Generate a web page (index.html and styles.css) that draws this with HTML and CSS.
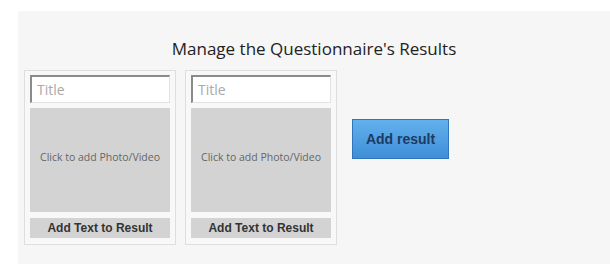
FILE: index.html
```html
<!DOCTYPE html>
<html lang="en">
<head>
    <meta charset="UTF-8">
    <meta name="viewport" content="width=device-width, initial-scale=1.0">
    <title>Questionnaire - Results</title>
    <link rel="stylesheet" href="styles.css">
</head>
<body>
    <div class="panel">
        <h2>Manage the Questionnaire's Results</h2>
        <div class="results">
            <div class="result-card">
                <input type="text" class="result-title" placeholder="Title">
                <div class="result-media">Click to add Photo/Video</div>
                <button type="button" class="result-text-btn">Add Text to Result</button>
            </div>
            <div class="result-card">
                <input type="text" class="result-title" placeholder="Title">
                <div class="result-media">Click to add Photo/Video</div>
                <button type="button" class="result-text-btn">Add Text to Result</button>
            </div>
            <button type="button" class="add-result-btn">Add result</button>
        </div>
    </div>
</body>
</html>
```

FILE: styles.css
```css
body {
    margin: 0;
    background-color: #fff;
    font-family: "Open Sans", Arial, sans-serif;
    color: #333;
}

.panel {
    margin: 11px 0 0 18px;
    height: 253px;
    padding: 0 6px;
    background-color: #f6f6f6;
    box-sizing: border-box;
}

h2 {
    margin: 0;
    padding-top: 26px;
    height: 59px;
    box-sizing: border-box;
    text-align: center;
    font-size: 17px;
    font-weight: normal;
    color: #222;
}

.results {
    display: flex;
    align-items: flex-start;
    gap: 9px;
}

.result-card {
    width: 152px;
    padding: 4px 5px 6px;
    border: 1px solid #dedede;
    background-color: #f8f8f8;
    box-sizing: border-box;
    display: flex;
    flex-direction: column;
}

.result-title {
    height: 28px;
    padding: 0 5px;
    border-top: 2px solid #8a8a8a;
    border-left: 2px solid #8a8a8a;
    border-right: 1px solid #e2e2e2;
    border-bottom: 1px solid #e2e2e2;
    background-color: #fff;
    font-family: "Open Sans", Arial, sans-serif;
    font-size: 14px;
    box-sizing: border-box;
    outline: none;
}

.result-title::placeholder {
    color: #aaa;
}

.result-media {
    height: 104px;
    padding-bottom: 6px;
    margin-top: 5px;
    background-color: #d3d3d3;
    box-sizing: border-box;
    display: flex;
    align-items: center;
    justify-content: center;
    font-size: 10.5px;
    color: #666;
    cursor: pointer;
}

.result-text-btn {
    height: 20px;
    margin-top: 6px;
    padding: 0;
    border: none;
    background-color: #d3d3d3;
    font-family: "Liberation Sans", Arial, sans-serif;
    font-weight: bold;
    font-size: 12px;
    color: #333;
    cursor: pointer;
}

.add-result-btn {
    width: 97px;
    height: 40px;
    margin: 49px 0 0 6px;
    border: 1px solid #2f74bd;
    background: linear-gradient(#62b0ec, #3f8fd8);
    font-family: "Liberation Sans", Arial, sans-serif;
    font-weight: bold;
    font-size: 14px;
    color: #1c3b62;
    cursor: pointer;
}
```
